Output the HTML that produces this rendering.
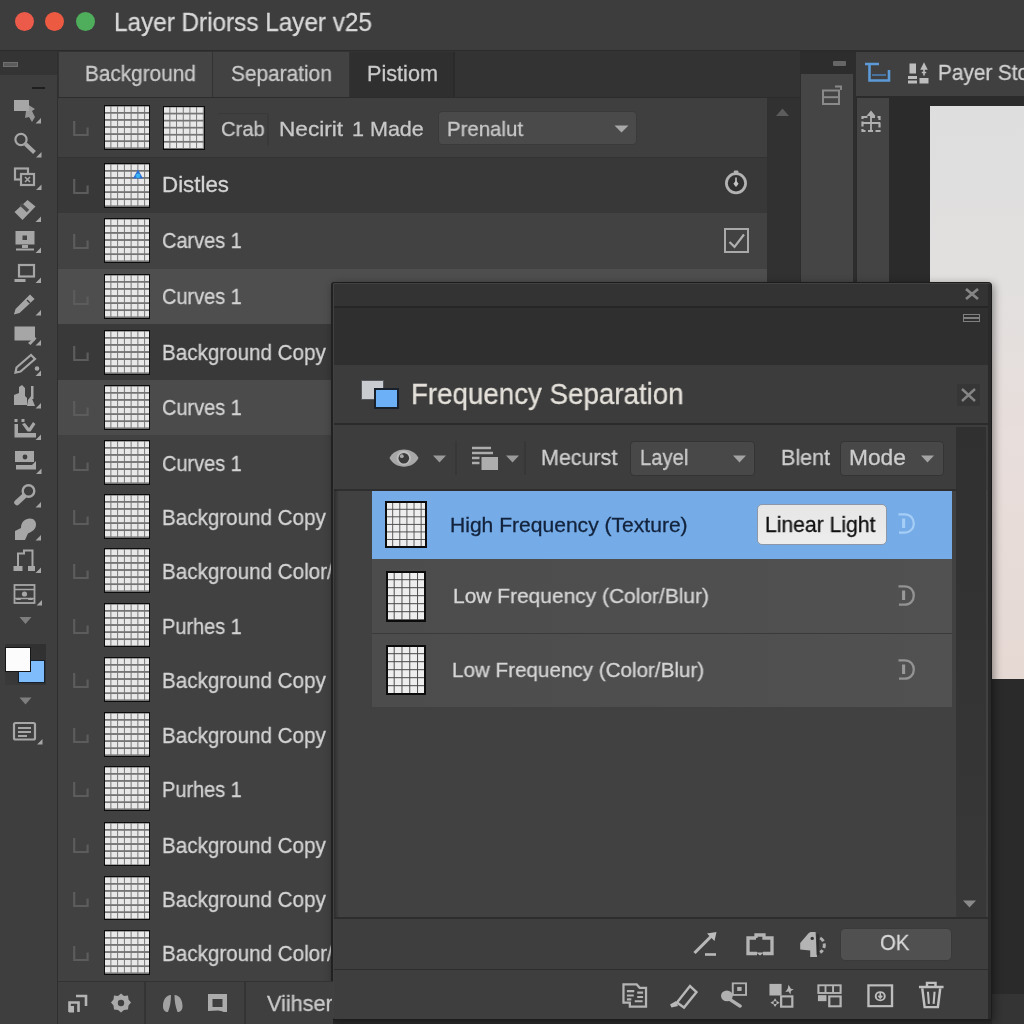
<!DOCTYPE html>
<html>
<head>
<meta charset="utf-8">
<title>Layer Driorss Layer v25</title>
<style>
*{box-sizing:border-box;margin:0;padding:0}
html,body{width:1024px;height:1024px;overflow:hidden;background:#3c3c3c;font-family:"Liberation Sans",sans-serif;color:#cfcfcf}
.a{position:absolute}
.t{position:absolute;white-space:nowrap;line-height:1;transform-origin:0 0;will-change:transform;-webkit-text-stroke:0.3px}
.thumb{position:absolute;border:1.5px solid #0c0c0c;background-color:#e8e8e8;
 background-image:linear-gradient(to right,#747474 0,#747474 1.35px,transparent 1.35px),linear-gradient(to bottom,#747474 0,#747474 1.35px,transparent 1.35px);
 background-size:6.75px 7.1px;background-position:5.4px 5.95px}
.dt{border-width:2px;background-color:#eeeeee;background-image:linear-gradient(to right,#484848 0,#484848 1.25px,transparent 1.25px),linear-gradient(to bottom,#484848 0,#484848 1.25px,transparent 1.25px)}
.row{position:absolute;left:58px;width:709px}
.vis{position:absolute;left:73px;width:16px;height:16px}
.ln{position:absolute;left:162px;font-size:20.6px;white-space:nowrap;line-height:1;color:#d2d2d2}
svg{position:absolute;overflow:visible}
</style>
</head>
<body>
<!-- TITLE BAR -->
<div class="a" id="titlebar" style="left:0;top:0;width:1024px;height:50px;background:#3d3d3d"></div>
<div class="a" style="left:0;top:50px;width:1024px;height:1.5px;background:#2b2b2b"></div>
<div class="a" style="left:14.5px;top:11.5px;width:19px;height:19px;border-radius:50%;background:#ec5a4a"></div>
<div class="a" style="left:45px;top:11.5px;width:19px;height:19px;border-radius:50%;background:#ec5a42"></div>
<div class="a" style="left:75.5px;top:11.5px;width:19px;height:19px;border-radius:50%;background:#4fae5c"></div>
<div class="t" style="left:114.2px;top:9.5px;font-size:25.1px;color:#d8d8d8;transform:scaleX(0.968);">Layer Driorss Layer v25</div>

<!-- LEFT TOOLBAR -->
<div class="a" id="ltool-top" style="left:0;top:51px;width:58px;height:24px;background:#343434"></div>
<div class="a" id="ltool" style="left:0;top:75px;width:58px;height:949px;background:#3e3e3e"></div>
<div class="a" style="left:56.5px;top:51px;width:2px;height:973px;background:#2f2f2f"></div>

<!-- TAB BAR -->
<div class="a" id="tabbar" style="left:58px;top:51px;width:742px;height:46px;background:#333333"></div>
<div class="a" style="left:59px;top:52px;width:153px;height:45px;background:#444444"></div>
<div class="a" style="left:213px;top:52px;width:136px;height:45px;background:#424242"></div>
<div class="a" style="left:350px;top:52px;width:103px;height:45px;background:#2f2f2f"></div>
<div class="a" style="left:453px;top:52px;width:1.5px;height:45px;background:#2a2a2a"></div>
<div class="t" style="left:85.2px;top:62.7px;font-size:21.65px;color:#c9c9c9;transform:scaleX(0.959);">Background</div>
<div class="t" style="left:231.2px;top:62.7px;font-size:21.65px;color:#c9c9c9;transform:scaleX(0.963);">Separation</div>
<div class="t" style="left:367.2px;top:62.7px;font-size:21.65px;color:#c9c9c9;">Pistiom</div>
<div class="a" style="left:58px;top:96.5px;width:742px;height:1.5px;background:#2c2c2c"></div>


<!-- LAYER ROWS -->
<div id="layers">
<div class="row" style="top:98px;height:59px;background:#3f3f3f"></div>
<div class="row" style="top:158px;height:55px;background:#383838"></div>
<div class="row" style="top:213px;height:55.5px;background:#424242"></div>
<div class="row" style="top:268.5px;height:55.5px;background:#4e4e4e"></div>
<div class="row" style="top:324px;height:56px;background:#393939"></div>
<div class="row" style="top:380px;height:55px;background:#4b4b4b"></div>
<div class="row" style="top:435px;height:546px;background:#414141"></div>
<div class="a" style="left:58px;top:156.5px;width:710px;height:1.5px;background:#333"></div>
<div class="thumb" style="left:104px;top:105px;width:46px;height:44.5px"></div>
<svg class="vis" style="top:121px" viewBox="0 0 16 16"><path d="M1.2 0V14H14.6V6.5" fill="none" stroke="#5c5c5c" stroke-width="2.2"/></svg>
<div class="thumb" style="left:104px;top:163px;width:46px;height:44.5px"></div>
<svg class="vis" style="top:179px" viewBox="0 0 16 16"><path d="M1.2 0V14H14.6V6.5" fill="none" stroke="#5c5c5c" stroke-width="2.2"/></svg>
<div class="t" style="left:161.89999999999998px;top:174.4px;font-size:22.0px;color:#d4d4d4;transform:scaleX(1.015);">Distles</div>
<div class="thumb" style="left:104px;top:218px;width:46px;height:44.5px"></div>
<svg class="vis" style="top:234px" viewBox="0 0 16 16"><path d="M1.2 0V14H14.6V6.5" fill="none" stroke="#5c5c5c" stroke-width="2.2"/></svg>
<div class="t" style="left:162.0px;top:229.7px;font-size:22.0px;color:#d4d4d4;transform:scaleX(0.906);">Carves 1</div>
<div class="thumb" style="left:104px;top:274px;width:46px;height:44.5px"></div>
<svg class="vis" style="top:290px" viewBox="0 0 16 16"><path d="M1.2 0V14H14.6V6.5" fill="none" stroke="#5c5c5c" stroke-width="2.2"/></svg>
<div class="t" style="left:162.0px;top:286.0px;font-size:22.0px;color:#d4d4d4;transform:scaleX(0.906);">Curves 1</div>
<div class="thumb" style="left:104px;top:330px;width:46px;height:44.5px"></div>
<svg class="vis" style="top:346px" viewBox="0 0 16 16"><path d="M1.2 0V14H14.6V6.5" fill="none" stroke="#5c5c5c" stroke-width="2.2"/></svg>
<div class="t" style="left:161.89999999999998px;top:342.2px;font-size:22.0px;color:#d4d4d4;transform:scaleX(0.936);">Background Copy</div>
<div class="thumb" style="left:104px;top:385px;width:46px;height:44.5px"></div>
<svg class="vis" style="top:401px" viewBox="0 0 16 16"><path d="M1.2 0V14H14.6V6.5" fill="none" stroke="#5c5c5c" stroke-width="2.2"/></svg>
<div class="t" style="left:162.0px;top:397.4px;font-size:22.0px;color:#d4d4d4;transform:scaleX(0.906);">Curves 1</div>
<div class="thumb" style="left:104px;top:440px;width:46px;height:44.5px"></div>
<svg class="vis" style="top:456px" viewBox="0 0 16 16"><path d="M1.2 0V14H14.6V6.5" fill="none" stroke="#5c5c5c" stroke-width="2.2"/></svg>
<div class="t" style="left:162.0px;top:452.7px;font-size:22.0px;color:#d4d4d4;transform:scaleX(0.906);">Curves 1</div>
<div class="thumb" style="left:104px;top:494px;width:46px;height:44.5px"></div>
<svg class="vis" style="top:510px" viewBox="0 0 16 16"><path d="M1.2 0V14H14.6V6.5" fill="none" stroke="#5c5c5c" stroke-width="2.2"/></svg>
<div class="t" style="left:161.89999999999998px;top:507.0px;font-size:22.0px;color:#d4d4d4;transform:scaleX(0.936);">Background Copy</div>
<div class="thumb" style="left:104px;top:548px;width:46px;height:44.5px"></div>
<svg class="vis" style="top:564px" viewBox="0 0 16 16"><path d="M1.2 0V14H14.6V6.5" fill="none" stroke="#5c5c5c" stroke-width="2.2"/></svg>
<div class="t" style="left:161.89999999999998px;top:561.0px;font-size:22.0px;color:#d4d4d4;transform:scaleX(0.937);">Background Color/</div>
<div class="thumb" style="left:104px;top:602.5px;width:46px;height:44.5px"></div>
<svg class="vis" style="top:618.5px" viewBox="0 0 16 16"><path d="M1.2 0V14H14.6V6.5" fill="none" stroke="#5c5c5c" stroke-width="2.2"/></svg>
<div class="t" style="left:161.79999999999998px;top:615.5px;font-size:22.0px;color:#d4d4d4;transform:scaleX(0.906);">Purhes 1</div>
<div class="thumb" style="left:104px;top:657px;width:46px;height:44.5px"></div>
<svg class="vis" style="top:673px" viewBox="0 0 16 16"><path d="M1.2 0V14H14.6V6.5" fill="none" stroke="#5c5c5c" stroke-width="2.2"/></svg>
<div class="t" style="left:161.89999999999998px;top:670.0px;font-size:22.0px;color:#d4d4d4;transform:scaleX(0.936);">Background Copy</div>
<div class="thumb" style="left:104px;top:712px;width:46px;height:44.5px"></div>
<svg class="vis" style="top:728px" viewBox="0 0 16 16"><path d="M1.2 0V14H14.6V6.5" fill="none" stroke="#5c5c5c" stroke-width="2.2"/></svg>
<div class="t" style="left:161.89999999999998px;top:725.0px;font-size:22.0px;color:#d4d4d4;transform:scaleX(0.936);">Background Copy</div>
<div class="thumb" style="left:104px;top:766px;width:46px;height:44.5px"></div>
<svg class="vis" style="top:782px" viewBox="0 0 16 16"><path d="M1.2 0V14H14.6V6.5" fill="none" stroke="#5c5c5c" stroke-width="2.2"/></svg>
<div class="t" style="left:161.79999999999998px;top:779.0px;font-size:22.0px;color:#d4d4d4;transform:scaleX(0.906);">Purhes 1</div>
<div class="thumb" style="left:104px;top:821.5px;width:46px;height:44.5px"></div>
<svg class="vis" style="top:837.5px" viewBox="0 0 16 16"><path d="M1.2 0V14H14.6V6.5" fill="none" stroke="#5c5c5c" stroke-width="2.2"/></svg>
<div class="t" style="left:161.89999999999998px;top:834.5px;font-size:22.0px;color:#d4d4d4;transform:scaleX(0.936);">Background Copy</div>
<div class="thumb" style="left:104px;top:875.5px;width:46px;height:44.5px"></div>
<svg class="vis" style="top:891.5px" viewBox="0 0 16 16"><path d="M1.2 0V14H14.6V6.5" fill="none" stroke="#5c5c5c" stroke-width="2.2"/></svg>
<div class="t" style="left:161.89999999999998px;top:888.5px;font-size:22.0px;color:#d4d4d4;transform:scaleX(0.936);">Background Copy</div>
<div class="thumb" style="left:104px;top:930px;width:46px;height:44.5px"></div>
<svg class="vis" style="top:946px" viewBox="0 0 16 16"><path d="M1.2 0V14H14.6V6.5" fill="none" stroke="#5c5c5c" stroke-width="2.2"/></svg>
<div class="t" style="left:161.89999999999998px;top:943.0px;font-size:22.0px;color:#d4d4d4;transform:scaleX(0.937);">Background Color/</div>
</div>
<div id="right">
<!-- options row content -->
<div class="thumb" style="left:163px;top:105.5px;width:42px;height:44px;background-size:6.7px 7.05px;background-position:5.4px 5.7px"></div>
<div class="a" style="left:218px;top:113px;width:51px;height:33px;border-top:1.5px solid #393939;border-right:2px solid #3a3a3a;border-radius:2px"></div>
<div class="t" style="left:221.2px;top:117.8px;font-size:21.0px;color:#c8c8c8;transform:scaleX(0.961);">Crab</div>
<div class="t" style="left:279.2px;top:117.8px;font-size:21.0px;color:#c8c8c8;transform:scaleX(1.078);">Necirit</div>
<div class="t" style="left:352.2px;top:117.8px;font-size:21.0px;color:#c8c8c8;transform:scaleX(1.025);">1 Made</div>
<div class="a" style="left:437.5px;top:111px;width:199px;height:33.5px;background:#4a4a4a;border-radius:4px;border:1px solid #3a3a3a"></div>
<div class="t" style="left:446.7px;top:117.8px;font-size:21.0px;color:#c8c8c8;transform:scaleX(0.971);">Prenalut</div>
<svg style="left:614px;top:125px;width:15px;height:8px" viewBox="0 0 15 8"><path d="M0.5 0.5H14.5L7.5 7.5Z" fill="#a8a8a8"/></svg>
<svg style="left:132px;top:169px;width:12px;height:12px" viewBox="0 0 12 12"><path d="M6 0.5L11 9.5H1Z" fill="#2e6fd6"/><circle cx="6" cy="6.8" r="2.2" fill="#35b6f2"/></svg>
<!-- Distles clock icon -->
<svg style="left:723px;top:169px;width:26px;height:26px" viewBox="0 0 26 26"><circle cx="13" cy="14.300" r="9.600" fill="#303030" stroke="#b2b2b2" stroke-width="2.800"/><rect x="10.800" y="1.600" width="4.600" height="3.600" rx="1.200" fill="#b2b2b2"/><path d="M13 8.500V13" stroke="#b2b2b2" stroke-width="1.800"/><path d="M13 11.500l2.600 3.300-2.600 3.300-2.600-3.300z" fill="#c4c4c4"/></svg>
<!-- Carves checkbox -->
<svg style="left:724px;top:227.5px;width:25px;height:25px" viewBox="0 0 25 25"><rect x="1" y="1" width="23" height="23" fill="none" stroke="#a9a9a9" stroke-width="2"/><path d="M5.500 14L10.500 18.800L20 6.500" fill="none" stroke="#b0b0b0" stroke-width="2.200"/></svg>

<!-- scroll column -->
<div class="a" style="left:767px;top:98px;width:33px;height:186px;background:#313131"></div>
<div class="a" style="left:768px;top:98px;width:0;height:0"></div>
<svg style="left:776px;top:108px;width:13px;height:8px" viewBox="0 0 13 8"><path d="M0 8L6.5 0.5L13 8Z" fill="#5c5c5c"/></svg>
<!-- narrow panel -->
<div class="a" style="left:800px;top:51.5px;width:56px;height:232px;background:#2d2d2d"></div>
<div class="a" style="left:800.5px;top:74px;width:52px;height:210px;background:#454545"></div>
<div class="a" style="left:833px;top:61px;width:13px;height:4.5px;background:#666;border-radius:1px"></div>
<svg style="left:821px;top:84px;width:22px;height:22px" viewBox="0 0 22 22"><rect x="2" y="6.5" width="16" height="13.5" fill="none" stroke="#8a8a8a" stroke-width="2"/><path d="M2 13.2H18" stroke="#8a8a8a" stroke-width="2"/><path d="M14 2.5H20V6" fill="none" stroke="#8a8a8a" stroke-width="1.8"/></svg>
<!-- right panel -->
<div class="a" style="left:856px;top:51.5px;width:168px;height:45px;background:#404040"></div>
<div class="a" style="left:856px;top:96px;width:168px;height:188px;background:#2b2b2b"></div>
<div class="a" style="left:856.5px;top:97.5px;width:32px;height:186px;background:#444444"></div>
<div class="a" id="canvas" style="left:930px;top:106px;width:94px;height:573px;background:linear-gradient(to bottom,#dedede 0,#e2e0df 180px,#e8dedb 330px,#e6d9d4 100%)"></div>
<svg style="left:865px;top:62px;width:25px;height:22px" viewBox="0 0 25 22"><path d="M0 2H14M4.5 2V18.5H24V8" fill="none" stroke="#5b9ad6" stroke-width="2.6"/><path d="M7 13H21" stroke="#4a7fb5" stroke-width="1.6"/></svg>
<svg style="left:908px;top:63px;width:21px;height:21px" viewBox="0 0 21 21"><rect x="1.5" y="0.5" width="6.5" height="10" fill="#bdbdbd"/><rect x="0" y="13" width="9" height="3" fill="#bdbdbd"/><rect x="0" y="17.5" width="9" height="3" fill="#bdbdbd"/><rect x="11.5" y="15" width="9" height="5.5" fill="#bdbdbd"/><path d="M16 1L13.5 6H18.5ZM16 6V12.5M13.8 9.5H18.2" stroke="#bdbdbd" stroke-width="1.6" fill="#bdbdbd"/></svg>
<div class="t" style="left:938.2px;top:62.1px;font-size:22.0px;color:#d0d0d0;transform:scaleX(0.943);">Payer Sto</div>
<svg style="left:861px;top:110px;width:20px;height:23px" viewBox="0 0 20 23"><path d="M10 0.5L5.5 6H14.5Z" fill="#b0b0b0"/><path d="M10 5V21M1 13H19" stroke="#b0b0b0" stroke-width="1.8"/><rect x="1.5" y="7" width="17" height="14" fill="none" stroke="#b0b0b0" stroke-width="2.2" stroke-dasharray="5 2.5"/></svg>

</div>
<div id="dialog">
<!-- under/right of dialog -->
<div class="a" style="left:990px;top:679px;width:34px;height:345px;background:#2a2a2a"></div>
<div class="a" style="left:990px;top:994px;width:34px;height:30px;background:#343434"></div>
<div class="a" style="left:332px;top:1016px;width:660px;height:8px;background:#2a2a2a"></div>
<!-- dialog frame -->
<div class="a" id="dlg" style="left:331.3px;top:282px;width:660.7px;height:738px;background:#414141;border:1.5px solid #1c1c1c;border-left:2.5px solid #212121;border-radius:3px 4px 3px 3px;box-shadow:2px 2px 9px rgba(0,0,0,.42)"></div>
<div class="a" style="left:333.8px;top:283.5px;width:654.2px;height:22.5px;background:#333333"></div>
<div class="a" style="left:333.8px;top:306px;width:654.2px;height:1.5px;background:#262626"></div>
<div class="a" style="left:333.8px;top:307.5px;width:654.2px;height:57.5px;background:#2f2f2f"></div>
<div class="a" style="left:333.8px;top:365px;width:654.2px;height:59px;background:#3c3c3c"></div>
<div class="a" style="left:333.8px;top:422.5px;width:654.2px;height:2.5px;background:#2b2b2b"></div>
<div class="a" style="left:333.8px;top:425px;width:654.2px;height:64.5px;background:#3d3d3d"></div>
<div class="a" style="left:333.8px;top:489px;width:622px;height:1.5px;background:#2e2e2e"></div>
<div class="a" style="left:987.8px;top:283.5px;width:3.2px;height:735px;background:#2a2a2a"></div>
<div class="a" style="left:333.800px;top:490px;width:5px;height:529px;background:linear-gradient(to right,rgba(30,30,30,.55),rgba(30,30,30,0))"></div>
<!-- close X (top strip) -->
<svg style="left:965px;top:288px;width:14px;height:12px" viewBox="0 0 14 12"><path d="M1 1L13 11M13 1L1 11" stroke="#858585" stroke-width="2.8"/></svg>
<div class="a" style="left:963px;top:314px;width:17px;height:8px;border:1.3px solid #808080"></div>
<div class="a" style="left:963px;top:317.3px;width:17px;height:1.4px;background:#808080"></div>
<!-- title -->
<div class="a" style="left:360.5px;top:380px;width:23.5px;height:19.5px;background:#c9ccd0;border:1px solid #55585c"></div>
<div class="a" style="left:374px;top:387.5px;width:24.5px;height:21px;background:#6cb0f7;border:2px solid #17202b"></div>
<div class="t" style="left:411.2px;top:380.1px;font-size:29.2px;color:#e4e0da;transform:scaleX(0.949);">Frequency Separation</div>
<div class="a" style="left:956.5px;top:383.5px;width:23px;height:22.5px;background:#363636"></div>
<svg style="left:960.5px;top:387.5px;width:15px;height:14px" viewBox="0 0 15 14"><path d="M1 1L14 13M14 1L1 13" stroke="#858585" stroke-width="2.4"/></svg>
<!-- toolbar -->
<svg style="left:389px;top:447.5px;width:30px;height:20px" viewBox="0 0 30 20"><path d="M0.5 10C6 -1.500 24 -1.500 29.500 10C24 21.500 6 21.500 0.500 10Z" fill="#a8a8a8"/><circle cx="14.800" cy="10" r="7.200" fill="#bcbcbc"/><circle cx="14.800" cy="10.200" r="5.300" fill="#3a3a3a"/><circle cx="12.800" cy="8.200" r="1.900" fill="#a8a8a8"/></svg>
<svg style="left:432.5px;top:455px;width:13px;height:8px" viewBox="0 0 13 8"><path d="M0 0.5H13L6.5 7.5Z" fill="#9a9a9a"/></svg>
<div class="a" style="left:455px;top:441px;width:1.5px;height:34px;background:#373737"></div>
<svg style="left:471px;top:446px;width:28px;height:25px" viewBox="0 0 28 25"><path d="M1 2H20M1 7H22M1 12H8.5M1 17H8.5" stroke="#adadad" stroke-width="2.6"/><rect x="10.5" y="11" width="16.5" height="13" fill="#adadad"/></svg>
<svg style="left:506px;top:455px;width:13px;height:8px" viewBox="0 0 13 8"><path d="M0 0.5H13L6.5 7.5Z" fill="#9a9a9a"/></svg>
<div class="a" style="left:524px;top:441px;width:1.5px;height:34px;background:#373737"></div>
<div class="t" style="left:540.7px;top:446.9px;font-size:21.8px;color:#cdcdcd;transform:scaleX(0.984);">Mecurst</div>
<div class="a" style="left:629.5px;top:441px;width:125px;height:34.5px;background:#484848;border-radius:4px;border:1px solid #343434"></div>
<div class="t" style="left:640.2px;top:447.1px;font-size:22.0px;color:#c9c9c9;transform:scaleX(0.918);">Layel</div>
<svg style="left:732.5px;top:455px;width:13px;height:8px" viewBox="0 0 13 8"><path d="M0 0.5H13L6.5 7.5Z" fill="#a4a4a4"/></svg>
<div class="t" style="left:780.8000000000001px;top:446.8px;font-size:22.0px;color:#cdcdcd;transform:scaleX(0.978);">Blent</div>
<div class="a" style="left:839.5px;top:441px;width:104px;height:34.5px;background:#484848;border-radius:4px;border:1px solid #343434"></div>
<div class="t" style="left:849.2px;top:446.8px;font-size:22.0px;color:#cdcdcd;transform:scaleX(1.033);">Mode</div>
<svg style="left:920.8px;top:455px;width:13px;height:8px" viewBox="0 0 13 8"><path d="M0 0.5H13L6.5 7.5Z" fill="#a4a4a4"/></svg>
<!-- list -->
<div class="a" style="left:955.5px;top:427px;width:30px;height:491px;background:linear-gradient(#303030,#333 40%,#383838)"></div>
<div class="a" style="left:371.5px;top:491px;width:580px;height:67.5px;background:#75ace8"></div>
<div class="a" style="left:371.5px;top:558.5px;width:580px;height:148px;background:linear-gradient(to right,#4c4c4c,#515151)"></div>
<div class="a" style="left:371.5px;top:632.5px;width:580px;height:1.5px;background:#3a3a3a"></div>
<div class="thumb dt" style="left:385px;top:500.5px;width:42px;height:47.5px;background-size:7.1px 7.55px;background-position:5.3px 5.8px"></div>
<div class="thumb dt" style="left:386px;top:571.3px;width:40px;height:50.5px;background-size:7.8px 8.0px;background-position:5.7px 6.2px"></div>
<div class="thumb dt" style="left:386px;top:644.6px;width:40px;height:50.5px;background-size:7.8px 8.0px;background-position:5.7px 6.2px"></div>
<div class="t" style="left:449.59999999999997px;top:514.2px;font-size:21.0px;color:#13233c;transform:scaleX(1.003);">High Frequency (Texture)</div>
<div class="t" style="left:452.7px;top:585.3px;font-size:21.0px;color:#d6d6d6;transform:scaleX(0.997);">Low Frequency (Color/Blur)</div>
<div class="t" style="left:452.0px;top:658.8px;font-size:21.0px;color:#d6d6d6;transform:scaleX(0.982);">Low Frequency (Color/Blur)</div>
<div class="a" style="left:756.5px;top:504px;width:130px;height:40.5px;background:linear-gradient(#e6e6e6,#ededed);border:1.5px solid #8c98a8;border-radius:5px"></div>
<div class="t" style="left:765.2px;top:514.2px;font-size:21.6px;color:#111;transform:scaleX(0.979);">Linear Light</div>
<svg style="left:898px;top:513px;width:17px;height:21px" viewBox="0 0 17 21"><path d="M0.5 1.3H6.5C12.5 1.3 15.8 5.6 15.8 10.5C15.8 15.8 12 19.7 6.5 19.7H1" fill="none" stroke="#a5cdf5" stroke-width="2.2"/><path d="M5.6 5.5V15" stroke="#a5cdf5" stroke-width="3.1"/></svg>
<svg style="left:898px;top:585px;width:17px;height:21px" viewBox="0 0 17 21"><path d="M0.5 1.3H6.5C12.5 1.3 15.8 5.6 15.8 10.5C15.8 15.8 12 19.7 6.5 19.7H1" fill="none" stroke="#939393" stroke-width="2.3"/><path d="M5.6 5.5V15" stroke="#999" stroke-width="3.1"/></svg>
<svg style="left:898px;top:659px;width:17px;height:21px" viewBox="0 0 17 21"><path d="M0.5 1.3H6.5C12.5 1.3 15.8 5.6 15.8 10.5C15.8 15.8 12 19.7 6.5 19.7H1" fill="none" stroke="#939393" stroke-width="2.3"/><path d="M5.6 5.5V15" stroke="#999" stroke-width="3.1"/></svg>
<svg style="left:963px;top:900px;width:13px;height:8px" viewBox="0 0 13 8"><path d="M0 0.5H13L6.5 7.5Z" fill="#8a8a8a"/></svg>
<!-- bottom rows -->
<div class="a" style="left:333.8px;top:917px;width:654.2px;height:1.5px;background:#2d2d2d"></div>
<div class="a" style="left:333.8px;top:918.5px;width:654.2px;height:50px;background:#3e3e3e"></div>
<div class="a" style="left:333.8px;top:968.5px;width:654.2px;height:1.5px;background:#2d2d2d"></div>
<div class="a" style="left:333.8px;top:970px;width:654.2px;height:48.5px;background:#3e3e3e"></div>
<div class="a" style="left:840px;top:927.5px;width:111.5px;height:33px;background:#505050;border-radius:5px;border:1px solid #3a3a3a"></div>
<div class="t" style="left:880.2px;top:932.4px;font-size:22.3px;color:#d8d8d8;transform:scaleX(0.913);">OK</div>

</div>
<div id="icons">
<!-- LEFT TOOLBAR ICONS -->
<div class="a" style="left:3px;top:62px;width:15px;height:5px;background:#5a5a5a;border:1px solid #707070"></div>
<div class="a" style="left:32px;top:86.5px;width:13px;height:2px;background:#1e1e1e"></div>
<svg id="lt" style="left:0;top:0;width:58px;height:1024px" viewBox="0 0 58 1024">
<g fill="#a6a6a6" stroke="none">
<!-- corner triangles -->
<path d="M41 118v5.500h-5.500zM41.500 152v5.500h-5.500zM41.500 184.500v5.500h-5.500zM41 216.500v5.500h-5.500zM41 247.500v5.500h-5.500zM41 277.500v5.500h-5.500zM41 310v5.500h-5.500zM41 340v5.500h-5.500zM41 370.500v5.500h-5.500zM41 403v5.500h-5.500zM41 434.500v5.500h-5.500zM41.500 468.500v5.500h-5.500zM41 502v5.500h-5.500zM41 535v5.500h-5.500zM41 567.500v5.500h-5.500zM42 600v5.500h-5.500zM42.500 739v5.500h-5.500z"/>
<!-- 1 image + cursor -->
<path d="M14 100h15v11h-15z"/><path d="M27 104l8 5-3 2 3 6-3 5-3-5-4 1z" opacity=".85"/>
<!-- 3 overlapping squares -->
<!-- 4 bandage -->
<path d="M14.500 212l13-12 8 6.500-13 13.500z"/>
<!-- 5 monitor solid -->
<path d="M15.500 231h19v13.500h-19zM22 245h6v3h-6zM16 248.500h18v2h-18z"/>
<!-- 8 filled rect -->
<path d="M14.500 326.500h20.500v14h-20.500z"/><path d="M28 343l7-6 1.500 1.500-6 6.500z"/>
<!-- 10 thumb -->
<path d="M14 395l5-2v-6l3-2 3 3v8l2 2v7h-13zM31 386h2.500v13h-2.500zM28 400l3-4 4 10h-8z"/>
<!-- 11 graph -->
<path d="M14.500 424h3.500v9h18v4.500h-21.500zM14.500 419h3v3h-3zM21.500 419h3v3h-3zM22 424l3-1 4 5 4-6 2.500 2-5 7.500h-3z"/>
<!-- 12 stamp -->
<path d="M15 451h19v11h-19zM16 465h16l4-4v8.500h-20z"/>
<!-- 14 blob -->
<path d="M15 540v-9l6-3c0-6 4-9.500 9-9.500 4 0 6 3 6 6 0 5-4 7-8 9l-3 6.500z"/>
<!-- 15 notes -->
<path d="M13.500 566h9v5h-9zM28 566h7v5h-7z"/>
<!-- triangles down -->
<path d="M19.500 617h12l-6 7zM19.500 697.500h12l-6 7z" fill="#7e7e7e"/>
</g>
<g fill="none" stroke="#a6a6a6" stroke-width="2.200">
<circle cx="21" cy="139.500" r="5.600"/><path d="M25.500 144l9 8.500" stroke-width="4"/>
<rect x="15" y="168.500" width="13" height="11"/><rect x="21" y="174" width="13" height="11" fill="#3e3e3e"/><path d="M25 177l5 5m0-5l-5 5" stroke-width="1.600"/>
<rect x="19" y="265" width="15" height="11.500"/><path d="M14.500 280.500h11" stroke-width="3"/>
<path d="M15.500 313l3.500-1 14-13-3-3-13.500 13.500z" fill="#a6a6a6"/><path d="M27 300l3 3" stroke="#3e3e3e" stroke-width="1.500"/>
<path d="M15.500 372.500l1-5 14.500-12.500 4 4-14.500 12.500z"/><circle cx="37" cy="368.500" r="1.200" fill="#a6a6a6"/>
<circle cx="28.500" cy="491" r="5.800" stroke-width="2.400"/><path d="M23.500 496.500l-6.500 6" stroke-width="5.500" stroke-linecap="round"/>
<path d="M18 567v-13.500h6v-3h8.500v16.500" stroke-width="2"/>
<rect x="14.500" y="585" width="20" height="18" stroke-width="1.800"/><path d="M14.500 589.500h20M14.500 598.500h20" stroke-width="1.600"/>
<rect x="14" y="723" width="21" height="16.500" rx="1.500"/><path d="M18 728h13M18 732h13M18 736h9" stroke-width="1.800"/>
</g>
<path d="M20.500 204l7.500 7" stroke="#4c4c4c" stroke-width="3.400"/><rect x="22.500" y="235.500" width="4.500" height="4.500" fill="#444"/><circle cx="25" cy="457" r="2.400" fill="#3e3e3e"/><circle cx="24.500" cy="594" r="2.600" fill="#a6a6a6"/>
<path d="M16 600c1-3 4-3 5 0M28 600c1-3 4-3 5 0" fill="#a6a6a6"/>
</svg>
<!-- colour swatches -->
<div class="a" style="left:4.500px;top:644px;width:41px;height:41px;background:linear-gradient(to bottom left,#303030 0,#333 45%,#3a3a3a 100%)"></div>
<div class="a" style="left:18px;top:659.500px;width:26.500px;height:23px;background:#7fbcfb;border:1.500px solid #14202c"></div>
<div class="a" style="left:5px;top:647px;width:26px;height:24.500px;background:#fcfcfc;border:1.500px solid #161616"></div>

<!-- LAYER PANEL BOTTOM BAR -->
<div class="a" style="left:58px;top:980.500px;width:275px;height:1.500px;background:#333"></div>
<div class="a" style="left:58px;top:982px;width:275px;height:42px;background:#3f3f3f"></div>
<div class="a" style="left:144px;top:982px;width:1.500px;height:42px;background:#343434"></div>
<div class="a" style="left:244px;top:982px;width:1.500px;height:42px;background:#343434"></div>
<svg style="left:68px;top:994px;width:20px;height:19px" viewBox="0 0 20 19"><path d="M8 2h10v10M1.500 18V8.500h9V18" fill="none" stroke="#b4b4b4" stroke-width="2.600"/><rect x="1" y="12" width="5" height="6.500" fill="#b4b4b4"/></svg>
<svg style="left:111px;top:993px;width:20px;height:20px" viewBox="0 0 20 20"><path d="M10 .5l3 2.500 4-.5.500 4 2.500 3-2.500 3-.5 4-4 .5-3 2.500-3-2.500-4-.5-.5-4-2.500-3 2.500-3 .5-4 4 .5z" fill="#a9a9a9"/><circle cx="10" cy="10" r="3.200" fill="#3f3f3f"/></svg>
<svg style="left:162px;top:994px;width:21px;height:19px" viewBox="0 0 21 19"><path d="M1 12c0-6 3-11 8-11 0 6-1 12-3 17-3 0-5-2-5-6zM12.500 1c5 0 8 5 8 11 0 4-2 6-5 6-2-5-3-11-3-17z" fill="#a2a2a2"/></svg>
<svg style="left:207px;top:993px;width:21px;height:20px" viewBox="0 0 21 20"><path d="M1 1h19v5h-19zM1 6h4.500v12h-4.500zM15.500 6h4.500v13h-4.500zM1 14h19v5l-9-1.500-10 .5z" fill="#ababab"/></svg>
<div class="a" style="left:262px;top:985px;width:70px;height:36px;overflow:hidden"><div class="t" style="left:4.8px;top:8.4px;font-size:22.0px;color:#c9c9c9;transform:scaleX(0.984);">Viihser</div></div>

<!-- DIALOG OK-ROW ICONS -->
<svg style="left:693px;top:931px;width:25px;height:26px" viewBox="0 0 25 26"><path d="M1.500 22L20 3.500" stroke="#b8b8b8" stroke-width="3.100" fill="none"/><path d="M14 2.500l9.500-1.500-2 9z" fill="#bdbdbd"/><path d="M12 23.500h11" stroke="#b8b8b8" stroke-width="2.600"/></svg>
<svg style="left:745.500px;top:932px;width:28px;height:24px" viewBox="0 0 28 24"><path d="M10 6V3h8V6h8V21.500H17M11 21.500H2V6h8" fill="none" stroke="#b4b4b4" stroke-width="3.300"/><path d="M10 20.500l4 3 4-3" fill="#b8b8b8"/></svg>
<svg style="left:800px;top:931px;width:26px;height:26px" viewBox="0 0 26 26"><path d="M10.400 1h5.200l1.400 25h-6.800v-6.600l-10-.8v-6.600l8.100-9.500z" fill="#b4b4b4"/><circle cx="12.200" cy="7.400" r="1.700" fill="#333"/><path d="M17.800 3v21" stroke="#2e2e2e" stroke-width="2.200"/><path d="M20.200 7c5.500 3 5.500 11 0 14.500" fill="none" stroke="#b0b0b0" stroke-width="3" stroke-dasharray="4.500 2.500"/></svg>
<!-- DIALOG BOTTOM-ROW ICONS -->
<svg style="left:622px;top:982.500px;width:25.500px;height:25px" viewBox="0 0 26 26" preserveAspectRatio="none"><path d="M1.500 1.500H15L18 5H24.500V24.500H8V20.500H1.500Z" fill="none" stroke="#b4b4b4" stroke-width="2.300"/><path d="M5 8.500H12.500M5 13H12M5 17H9.500M15.500 10H21.500M15.500 14.500H21.500M13 19H21" stroke="#b4b4b4" stroke-width="2.200"/></svg>
<svg style="left:668px;top:981px;width:30px;height:28px" viewBox="0 0 30 28"><path d="M9 21.500L22 5l6.500 6L16 26.500z" fill="none" stroke="#b8b8b8" stroke-width="2.400"/><path d="M8 20l-6 3.500 1.500 3L10 25z" fill="#b8b8b8"/></svg>
<svg style="left:719.5px;top:982.3px;width:27.5px;height:25px" viewBox="0 0 28 28" preserveAspectRatio="none"><rect x="13" y="1.500" width="13.500" height="13" fill="none" stroke="#b0b0b0" stroke-width="2"/><rect x="17.500" y="5.500" width="4.500" height="4.500" fill="#b0b0b0"/><circle cx="7" cy="15.500" r="6" fill="#b0b0b0"/><path d="M10 19.500l10.500 7.500" stroke="#b0b0b0" stroke-width="3.600" stroke-linecap="round"/></svg>
<svg style="left:768.7px;top:983.2px;width:25.2px;height:25px" viewBox="0 0 27 28" preserveAspectRatio="none"><rect x=".5" y="1" width="13" height="13" fill="#b4b4b4"/><rect x="13" y="15" width="12" height="11.500" fill="none" stroke="#b4b4b4" stroke-width="2.400"/><path d="M21 2l2.500 4.500 3 .5-3 2-.5 4-2-3.500-3.500.5 2.500-3.500zM6.500 17l2 3.500h-4zM6.500 27l2-3.500h-4zM1.500 22l3.500-2v4zM11.500 22l-3.500-2v4z" fill="#b4b4b4"/></svg>
<svg style="left:816.5px;top:984px;width:25.5px;height:24px" viewBox="0 0 27 28" preserveAspectRatio="none"><rect x="1.500" y="1.500" width="23.500" height="9" fill="none" stroke="#b4b4b4" stroke-width="2.200"/><path d="M9 1.500v9M17 1.500v9" stroke="#b4b4b4" stroke-width="2"/><rect x="1" y="13" width="9" height="7" fill="#b4b4b4"/><rect x="13" y="14.500" width="12" height="11.500" fill="none" stroke="#b4b4b4" stroke-width="2.400"/></svg>
<svg style="left:866.5px;top:984px;width:26.5px;height:23.5px" viewBox="0 0 27 26" preserveAspectRatio="none"><rect x="1.500" y="1.500" width="24" height="23" fill="none" stroke="#bdbdbd" stroke-width="2.400"/><circle cx="13.500" cy="13.500" r="4.600" fill="none" stroke="#bdbdbd" stroke-width="2"/><path d="M13.500 9v5.500M11.500 13l2 2.500 2-2.500" stroke="#bdbdbd" stroke-width="1.600" fill="none"/></svg>
<svg style="left:917.7px;top:980.5px;width:26.5px;height:28px" viewBox="0 0 28 30" preserveAspectRatio="none"><path d="M1 6.500h26M9.500 6V2h9v4" fill="none" stroke="#c0c0c0" stroke-width="2.600"/><path d="M4.500 8l2.500 20h14l2.500-20" fill="none" stroke="#c0c0c0" stroke-width="2.600"/><path d="M10.500 11.500l1 13M17.500 11.500l-1 13" stroke="#c0c0c0" stroke-width="2.200"/></svg>

</div>
</body>
</html>
